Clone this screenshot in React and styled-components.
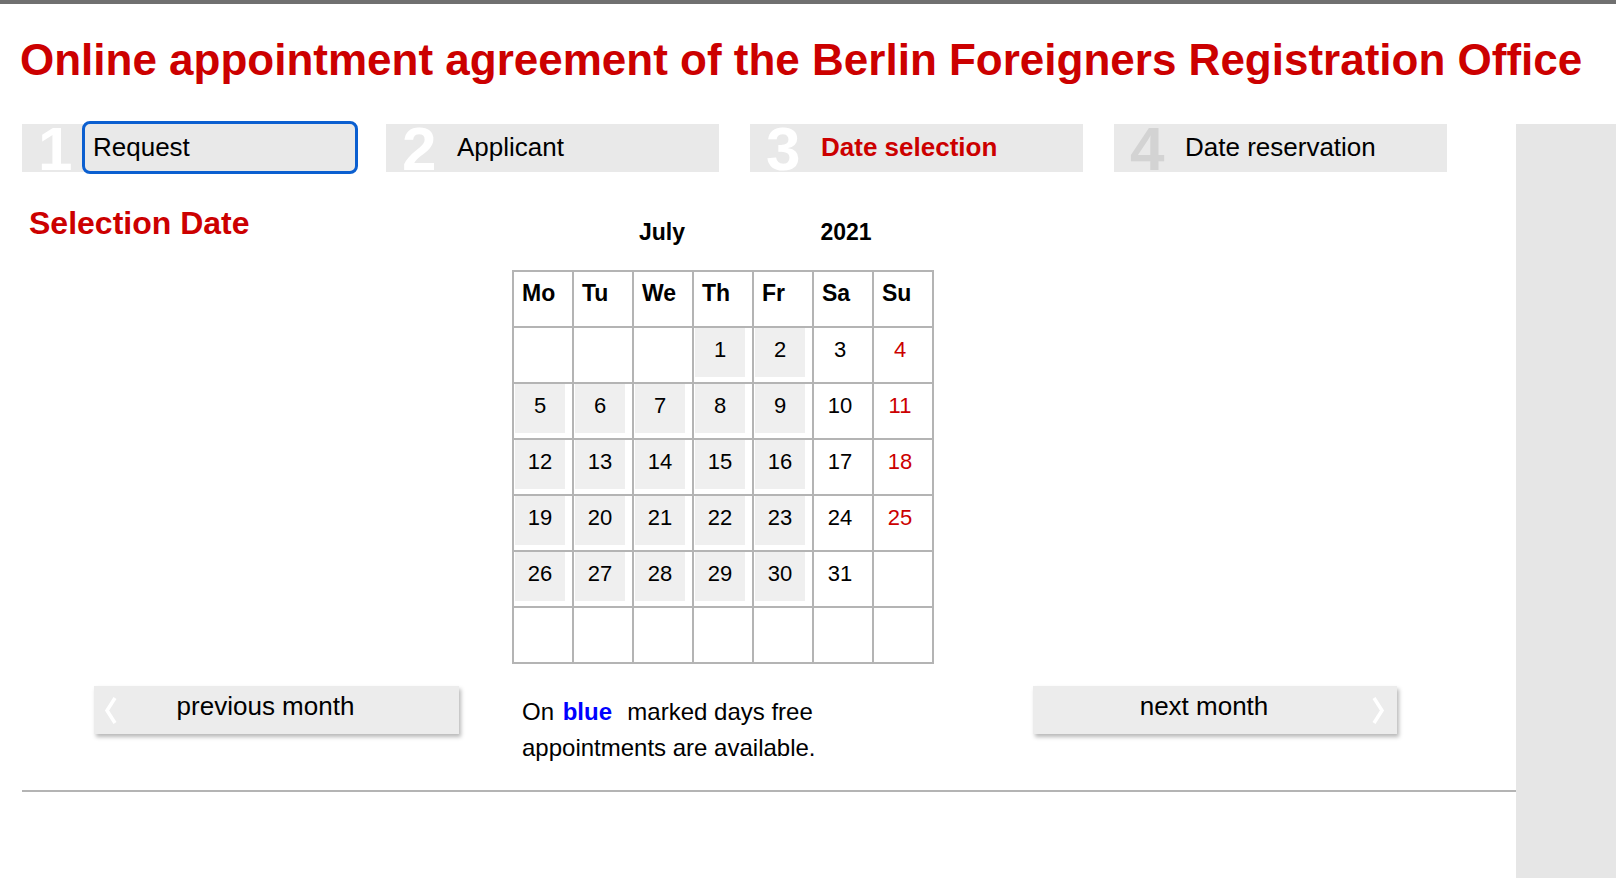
import styled, { createGlobalStyle } from 'styled-components';

const GlobalStyle = createGlobalStyle`
  html, body { margin: 0; padding: 0; background: #fff; }
  body { font-family: "Liberation Sans", Arial, sans-serif; color: #000; }
`

const Page = styled.div`
  min-height: 100vh;
  box-sizing: border-box;
  border-top: 4px solid #707070;
  display: flex; flex-direction: column;
`
const Title = styled.h1`
  margin: 31px 0 0 20px;
  font-size: 44px; line-height: 50px; font-weight: bold;
  color: #cc0000; white-space: nowrap;
`
const Body = styled.div`
  flex: 1;
  display: flex;
  margin-top: 39px;
`
const Main = styled.div`
  width: 1516px; flex-shrink: 0;
  box-sizing: border-box;
  padding-left: 22px;
`
const Side = styled.div`
  flex: 1;
  background: #e6e6e6;
`

/* steps */
const Steps = styled.div`
  display: flex; gap: 31px;
`
const Step = styled.div`
  width: 333px; height: 48px;
  background: #e9e9e9;
  display: flex; align-items: flex-start;
`
const StepNum = styled.span`
  width: 47px; height: 48px;
  padding-left: 16px; flex-shrink: 0;
  font-size: 62px; font-weight: bold; line-height: 50px;
  color: ${p => p.$muted ? '#d3d3d3' : '#fff'};
  box-sizing: content-box;
`
const StepLabel = styled.a`
  flex: 1; height: 47px;
  display: flex; align-items: center;
  padding-left: 8px;
  font-size: 26px;
  font-weight: ${p => p.$active ? 'bold' : 'normal'};
  color: ${p => p.$active ? '#cc0000' : '#000'};
  text-decoration: none;
  border-radius: 5px;
  outline: ${p => p.$focused ? '3px solid #0b5fd0' : 'none'};
`

/* content */
const Content = styled.div`
  display: grid;
  grid-template-columns: 490px 422px 1fr;
`
const SectionTitle = styled.h2`
  margin: 33px 0 0 7px;
  font-size: 32px; line-height: 37px; font-weight: bold;
  color: #cc0000;
`
const Calendar = styled.div``
const MonthHead = styled.div`
  display: flex;
  margin-top: 47px;
  font-size: 23px; line-height: 26px; font-weight: bold;
`
const Month = styled.div`
  width: 300px; text-align: center;
`
const Year = styled.div`
  width: 60px; margin-left: 4px; text-align: center;
`
const Grid = styled.div`
  margin-top: 25px;
  display: grid;
  grid-template-columns: repeat(7, 58px);
  grid-auto-rows: 54px;
  gap: 2px; padding: 2px;
  width: fit-content;
  background: #b4b4b4;
`
const HeadCell = styled.div`
  background: #fff;
  padding: 8px 0 0 8px;
  font-size: 23px; line-height: 26px; font-weight: bold;
`
const DayCell = styled.div`
  background: #fff;
  padding-left: 1px;
`
const Day = styled.div`
  width: 50px; height: 49px;
  box-sizing: border-box;
  padding-bottom: 6px;
  display: flex; align-items: center; justify-content: center;
  font-size: 22px;
  background: ${p => p.$open ? '#efefef' : 'transparent'};
  color: ${p => p.$sunday ? '#cc0000' : '#000'};
`

const NavButton = styled.button`
  position: relative;
  margin: 22px 0 0 ${p => p.$offset}px;
  width: ${p => p.$width}px; height: 48px;
  box-sizing: border-box;
  padding: 0 22px 7px 0;
  display: flex; align-items: center; justify-content: center;
  border: none;
  background: #ececec;
  box-shadow: 2px 3px 4px rgba(0, 0, 0, 0.28);
  font-family: inherit; font-size: 26px; color: #000;
  cursor: pointer;
`
const Chevron = styled.svg`
  position: absolute; top: 10px;
  ${p => p.$side}: ${p => p.$side === 'left' ? 10 : 12}px;
`
const Legend = styled.p`
  margin: 30px 0 0;
  padding-left: 10px;
  font-size: 24px; line-height: 36px;
  b { color: #0000ff; margin: 0 2px 0 2px; }
`
const Divider = styled.div`
  margin-top: 24px;
  height: 2px;
  background: #b4b4b4;
`

const steps = [
  { n: 1, label: 'Request', focused: true },
  { n: 2, label: 'Applicant' },
  { n: 3, label: 'Date selection', active: true },
  { n: 4, label: 'Date reservation', muted: true },
]

const weekDays = ['Mo', 'Tu', 'We', 'Th', 'Fr', 'Sa', 'Su']

// July 2021 starts on a Thursday
const cells = []
for (let i = 0; i < 3; i++) cells.push(null)
for (let d = 1; d <= 31; d++) cells.push(d)
while (cells.length < 42) cells.push(null)

const Arrow = ({ side }) => (
  <Chevron $side={side} width="14" height="29" viewBox="0 0 14 29">
    <polyline
      points={side === 'left' ? '11,2 3,14.5 11,27' : '3,2 11,14.5 3,27'}
      fill="none" stroke="#fff" strokeWidth="3.5" strokeLinejoin="miter"
    />
  </Chevron>
)

const App = () => {
  return <Page>
    <GlobalStyle />
    <Title>Online appointment agreement of the Berlin Foreigners Registration Office</Title>
    <Body>
      <Main>
        <Steps>
          {steps.map(s => (
            <Step key={s.n}>
              <StepNum $muted={s.muted}>{s.n}</StepNum>
              <StepLabel href="#" $active={s.active} $focused={s.focused}>{s.label}</StepLabel>
            </Step>
          ))}
        </Steps>

        <Content>
          <SectionTitle>Selection Date</SectionTitle>
          <Calendar>
            <MonthHead>
              <Month>July</Month>
              <Year>2021</Year>
            </MonthHead>
            <Grid>
              {weekDays.map(w => <HeadCell key={w}>{w}</HeadCell>)}
              {cells.map((d, i) => {
                const col = i % 7
                return <DayCell key={i}>
                  {d && <Day $open={col < 5} $sunday={col === 6}>{d}</Day>}
                </DayCell>
              })}
            </Grid>
          </Calendar>
          <div />

          <NavButton $offset={72} $width={365}>
            <Arrow side="left" />
            previous month
          </NavButton>
          <Legend>On <b>blue</b>&nbsp; marked days free appointments are available.</Legend>
          <NavButton $offset={99} $width={364}>
            next month
            <Arrow side="right" />
          </NavButton>
        </Content>

        <Divider />
      </Main>
      <Side />
    </Body>
  </Page>
}

export default App;
